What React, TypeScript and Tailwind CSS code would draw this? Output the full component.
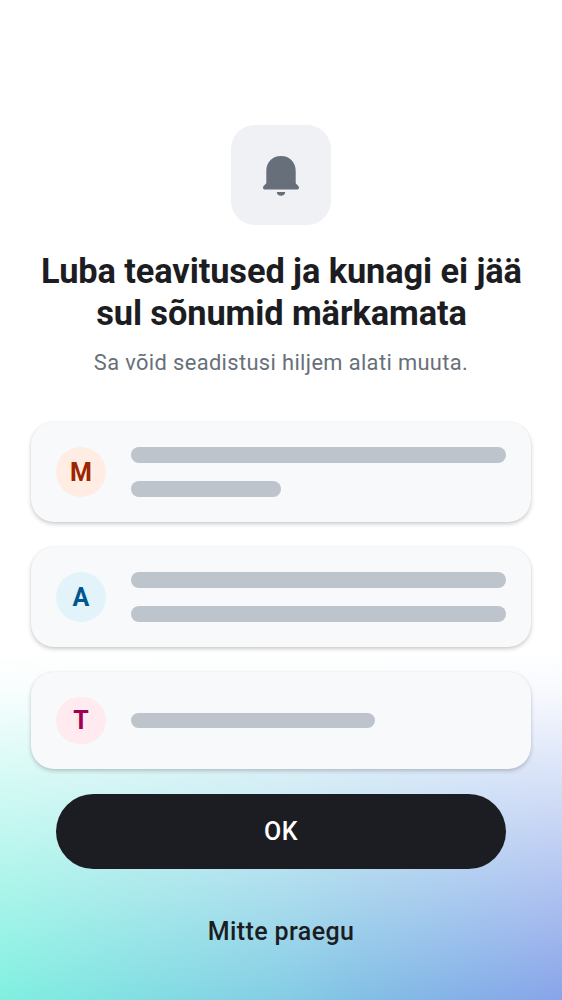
type CardProps = {
  letter: string;
  avatar: string;
  bars: string[];
  height?: string;
  avatarHeight?: string;
};

function MessageCard({ letter, avatar, bars, height = "h-[100px]", avatarHeight = "h-[50px]" }: CardProps) {
  return (
    <li
      className={`flex items-center gap-[25px] rounded-[23px] bg-[#f8f9fb] px-[25px] shadow-[0_2px_4px_rgba(0,0,0,0.2),0_0_2px_rgba(0,0,0,0.06)] ${height}`}
    >
      <div
        className={`flex w-[50px] shrink-0 items-center justify-center rounded-[25px] text-[25px] font-bold leading-none ${avatarHeight} ${avatar}`}
      >
        {letter}
      </div>
      <div className="flex flex-1 flex-col gap-[18.75px]">
        {bars.map((width, i) => (
          <div key={i} className={`h-[15.625px] rounded-full bg-[#bdc4cc] ${width}`} />
        ))}
      </div>
    </li>
  );
}

function BellIcon() {
  return (
    <svg viewBox="0 0 40 44" className="h-[44px] w-[40px]" fill="#67707a" aria-hidden="true">
      <path d="M5.3 18C5.3 9.3 11.2 3 20 3s14.7 6.3 14.7 15v12.3l2.4 2.4c1.8 1.8.8 3.8-1.2 3.8H4.1c-2 0-3-2-1.2-3.8l2.4-2.4Z" />
      <path d="M15.8 39h8.4c0 2.2-1.7 3.8-4.2 3.8S15.8 41.2 15.8 39Z" />
    </svg>
  );
}

export default function App() {
  return (
    <main className="h-[1000px] w-[562px] overflow-hidden bg-white bg-[linear-gradient(to_bottom,#ffffff_0%,#ffffff_65.3%,rgba(255,255,255,0.94)_69%,rgba(255,255,255,0)_100%),linear-gradient(to_right,#80f0e0_0%,#84cde5_50%,#82bfe5_65%,#84b0e8_84%,#88a4e9_100%)] font-['Roboto',sans-serif] text-[#1c1d22]">
      <div className="flex flex-col items-center pt-[125px]">
        <div className="flex size-[100px] items-center justify-center rounded-[24px] bg-[#f0f1f5]">
          <BellIcon />
        </div>
        <h1 className="mt-[25px] pl-[1px] text-center text-[34.375px] font-bold leading-[42px] tracking-[-0.09px]">
          <span className="block whitespace-nowrap">Luba teavitused ja kunagi ei jää</span>
          <span className="block whitespace-nowrap">sul sõnumid märkamata</span>
        </h1>
        <p className="mt-[15px] whitespace-nowrap text-[21.875px] leading-[28px] tracking-[0.37px] text-[#67707a]">
          Sa võid seadistusi hiljem alati muuta.
        </p>
      </div>
      <ul className="mx-[31px] mt-[45px] flex flex-col gap-[25px]">
        <MessageCard letter="M" avatar="pt-[1px] bg-[#ffede3] text-[#9c2500]" bars={["w-full", "w-[150px]"]} />
        <MessageCard letter="A" avatar="pt-[1px] bg-[#e2f4f9] text-[#005790]" bars={["w-full", "w-full"]} />
        <MessageCard
          letter="T"
          avatar="bg-[#ffebef] text-[#a10050]"
          bars={["w-[244px]"]}
          height="h-[97px]"
          avatarHeight="h-[47px]"
        />
      </ul>
      <div className="mx-[56px] mt-[25px] flex flex-col gap-[25px]">
        <button className="h-[75px] rounded-full bg-[#1c1d22] text-[25px] font-medium tracking-[0.4px] text-white">OK</button>
        <button className="h-[75px] rounded-full text-[25px] font-medium tracking-[0.4px]">Mitte praegu</button>
      </div>
    </main>
  );
}
